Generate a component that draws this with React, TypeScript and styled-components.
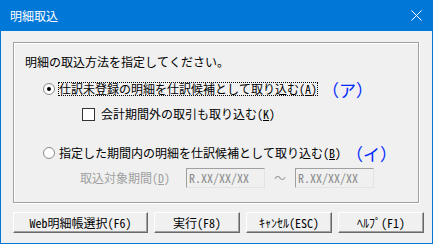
import React from "react";
import styled, { createGlobalStyle } from "styled-components";

const GlobalStyle = createGlobalStyle`
  html, body {
    margin: 0;
    padding: 0;
    background: #f0f0f0;
  }
  body {
    font-family: "Noto Sans Mono CJK JP", "Noto Sans CJK JP", monospace;
    font-size: 12px;
    color: #000;
  }
`;

const Dialog = styled.div`
  width: 433px;
  height: 244px;
  box-sizing: border-box;
  border: 1px solid #0078d7;
  border-top: none;
  background: #f0f0f0;
  display: flex;
  flex-direction: column;
`;

const TitleBar = styled.div`
  height: 31px;
  margin: 0 -1px;
  background: #0078d7;
  color: #fff;
  display: flex;
  align-items: center;
  justify-content: space-between;
  padding: 0 11px 0 10px;
  font-family: "Noto Sans CJK JP", sans-serif;
  font-size: 12px;
`;

const Body = styled.div`
  flex: 1;
  display: flex;
  flex-direction: column;
  padding: 11px 0 0 12px;
`;

const GroupBox = styled.div`
  width: 406px;
  height: 161px;
  box-sizing: border-box;
  border: 1px solid #a0a0a0;
  box-shadow: 1px 1px 0 #fff, inset 1px 1px 0 #fff;
  display: flex;
  flex-direction: column;
  padding-left: 11px;
`;

const Row = styled.div<{ $top: number; $indent?: number; $h?: number }>`
  display: flex;
  align-items: center;
  height: ${({ $h }) => $h ?? 16}px;
  margin-top: ${({ $top }) => $top}px;
  margin-left: ${({ $indent }) => $indent ?? 0}px;
  white-space: nowrap;
  line-height: 1;
`;

const Radio = styled.span<{ $checked?: boolean }>`
  width: 12px;
  height: 12px;
  box-sizing: border-box;
  border-radius: 50%;
  border: 1px solid #8a8a8a;
  background: #fff;
  display: flex;
  align-items: center;
  justify-content: center;
  margin-right: 3px;
  flex: none;

  &::after {
    content: "";
    width: 4px;
    height: 4px;
    border-radius: 50%;
    background: ${({ $checked }) => ($checked ? "#000" : "transparent")};
  }
`;

const Check = styled.span`
  width: 13px;
  height: 13px;
  box-sizing: border-box;
  border: 1px solid #333;
  background: #fff;
  margin-right: 5px;
  flex: none;
`;

const Label = styled.span<{ $focus?: boolean; $disabled?: boolean; $w?: number }>`
  padding: 1px 1px;
  outline: ${({ $focus }) => ($focus ? "1px dotted #000" : "none")};
  outline-offset: -1px;
  color: ${({ $disabled }) => ($disabled ? "#a0a0a0" : "#000")};
  ${({ $w }) => ($w ? `width: ${$w}px;` : "")}
`;

const Key = styled.span`
  text-decoration: underline;
`;

const Marker = styled.span`
  font-family: "Noto Sans Mono CJK JP", "Noto Sans CJK JP", monospace;
  font-size: 17px;
  font-weight: 500;
  color: #0026ff;
  margin-left: 4px;
`;

const DateBox = styled.div`
  width: 79px;
  height: 20px;
  box-sizing: border-box;
  border: 1px solid;
  border-color: #a0a0a0 #e3e3e3 #e3e3e3 #a0a0a0;
  background: #f0f0f0;
  color: #8a8a8a;
  display: flex;
  align-items: center;
  padding-left: 2px;
`;

const Tilde = styled.span`
  color: #a0a0a0;
  width: 30px;
  text-align: center;
`;

const ButtonRow = styled.div`
  display: flex;
  gap: 6px;
  margin-top: 9px;
`;

const Button = styled.div<{ $w: number }>`
  width: ${({ $w }) => $w}px;
  height: 21px;
  box-sizing: border-box;
  border: 1px solid;
  border-color: #fff #696969 #696969 #fff;
  box-shadow: inset -1px -1px 0 #a0a0a0;
  background: #f0f0f0;
  display: flex;
  align-items: center;
  justify-content: center;
  line-height: 1;
`;

export default function App() {
  return (
    <>
      <GlobalStyle />
      <Dialog>
        <TitleBar>
          <span>明細取込</span>
          <svg width="11" height="11" viewBox="0 0 11 11">
            <path d="M0.5 0.5 L10.5 10.5 M10.5 0.5 L0.5 10.5" stroke="#fff" strokeWidth="1" />
          </svg>
        </TitleBar>
        <Body>
          <GroupBox>
            <Row $top={11}>明細の取込方法を指定してください。</Row>
            <Row $top={11} $indent={18}>
              <Radio $checked />
              <Label $focus>
                仕訳未登録の明細を仕訳候補として取り込む(<Key>A</Key>)
              </Label>
              <Marker>（ア）</Marker>
            </Row>
            <Row $top={10} $indent={57} $h={14}>
              <Check />
              <Label>
                会計期間外の取引も取り込む(<Key>K</Key>)
              </Label>
            </Row>
            <Row $top={24} $indent={18}>
              <Radio />
              <Label>
                指定した期間内の明細を仕訳候補として取り込む(<Key>B</Key>)
              </Label>
              <Marker>（イ）</Marker>
            </Row>
            <Row $top={7} $indent={54} $h={20}>
              <Label $disabled $w={105}>
                取込対象期間(<Key>D</Key>)
              </Label>
              <DateBox>R.XX/XX/XX</DateBox>
              <Tilde>～</Tilde>
              <DateBox>R.XX/XX/XX</DateBox>
            </Row>
          </GroupBox>
          <ButtonRow>
            <Button $w={135}>Web明細帳選択(F6)</Button>
            <Button $w={86}>実行(F8)</Button>
            <Button $w={86}>ｷｬﾝｾﾙ(ESC)</Button>
            <Button $w={86}>ﾍﾙﾌﾟ(F1)</Button>
          </ButtonRow>
        </Body>
      </Dialog>
    </>
  );
}
